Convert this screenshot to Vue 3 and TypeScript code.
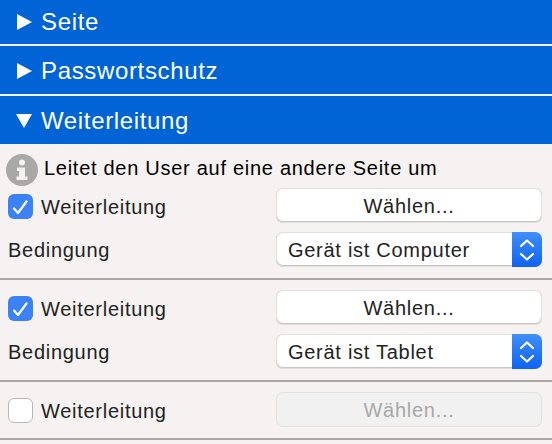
<script setup lang="ts">
interface Redirect {
  id: number;
  checked: boolean;
  condition?: string;
}

const sections = [
  { id: 'page', title: 'Seite', open: false },
  { id: 'password', title: 'Passwortschutz', open: false },
  { id: 'redirect', title: 'Weiterleitung', open: true },
];

const redirects: Redirect[] = [
  { id: 1, checked: true, condition: 'Gerät ist Computer' },
  { id: 2, checked: true, condition: 'Gerät ist Tablet' },
  { id: 3, checked: false },
];
</script>

<template>
  <div class="panel">
    <div
      v-for="s in sections"
      :key="s.id"
      class="heading"
      :class="{ open: s.open }"
    >
      <svg class="arrow" viewBox="0 0 16 16" width="16" height="16">
        <path v-if="s.open" d="M0 1 H16 L8 15 Z" fill="#fff" />
        <path v-else d="M1 0 L16 8 L1 16 Z" fill="#fff" />
      </svg>
      <span>{{ s.title }}</span>
    </div>

    <div class="content">
      <div class="info">
        <svg class="info-icon" viewBox="0 0 32 32" width="32" height="32">
          <circle cx="16" cy="16" r="16" fill="#a9a8a7" />
          <circle cx="16" cy="8.5" r="3" fill="#f5f2f1" />
          <path d="M11 13.5 H19 V22.5 H21.5 V26 H10.5 V22.5 H13 V17 H11 Z" fill="#f5f2f1" />
        </svg>
        <span class="info-text">Leitet den User auf eine andere Seite um</span>
      </div>

      <div
        v-for="r in redirects"
        :key="r.id"
        class="group"
        :class="{ first: r.id === 1 }"
      >
        <div class="check-label">
          <span class="checkbox" :class="{ checked: r.checked }">
            <svg v-if="r.checked" viewBox="0 0 25 25" width="25" height="25">
              <path d="M6 14.5 L10 19 L18.5 7.5" fill="none" stroke="#fff" stroke-width="2.2" stroke-linecap="round" stroke-linejoin="round" />
            </svg>
          </span>
          <span>Weiterleitung</span>
        </div>
        <button class="btn" :disabled="!r.checked">Wählen...</button>

        <template v-if="r.condition">
          <div class="label">Bedingung</div>
          <div class="select">
            <span class="select-text">{{ r.condition }}</span>
            <span class="stepper">
              <svg viewBox="0 0 30 36" width="30" height="36">
                <path d="M9 14 L15 8.5 L21 14 M9 22 L15 27.5 L21 22" fill="none" stroke="#fff" stroke-width="2.2" stroke-linecap="round" stroke-linejoin="round" />
              </svg>
            </span>
          </div>
        </template>
      </div>
    </div>
  </div>
</template>

<style>
html,
body {
  margin: 0;
  background: #f5f2f1;
}
</style>

<style scoped>
.panel {
  width: 552px;
  height: 444px;
  overflow: hidden;
  font-family: 'Liberation Sans', Arial, sans-serif;
  background: #f5f2f1;
  color: #222;
}

.heading {
  display: flex;
  align-items: center;
  gap: 9px;
  height: 44px;
  padding-left: 16px;
  margin-bottom: 2px;
  background: #0064d6;
  color: #fff;
  font-size: 24px;
  letter-spacing: 0.65px;
}

.heading:nth-child(2),
.heading.open {
  box-sizing: border-box;
  height: 48px;
  padding-top: 2px;
}

.heading.open {
  margin-bottom: 0;
}

.info {
  display: flex;
  align-items: center;
  gap: 6px;
  height: 32px;
  padding: 10px 0 2px 6px;
  font-size: 20px;
  letter-spacing: 0.72px;
  color: #000;
}

.info-text {
  margin-bottom: 4px;
}

.group {
  display: grid;
  grid-template-columns: 1fr 266px;
  align-items: center;
  row-gap: 9px;
  padding: 10px 10px 11px 8px;
  border-bottom: 2px solid #a9a8a7;
  font-size: 20px;
  letter-spacing: 0.72px;
  line-height: 24px;
}

.group.first {
  padding-top: 0;
}

.check-label {
  display: flex;
  align-items: center;
  gap: 8px;
  padding-top: 2px;
}

.label {
  padding-top: 1px;
}

.checkbox {
  display: block;
  width: 25px;
  height: 25px;
  box-sizing: border-box;
  border: 1px solid #b9b7b6;
  border-radius: 6px;
  background: #fff;
}

.checkbox.checked {
  border: 0;
  background: #3b82f7;
}

.checkbox svg {
  display: block;
}

.btn {
  height: 35px;
  padding: 1px 0 0;
  border: 0;
  border-radius: 7px;
  background: #fff;
  box-shadow: inset 0 0 0 1px #e2e0df, inset 0 -1px 0 1px #c8c6c5;
  color: #222;
  font: inherit;
  letter-spacing: inherit;
}

.btn:disabled {
  background: #f2f1f1;
  box-shadow: inset 0 0 0 1px #e4e2e1;
  color: #a8a8a8;
}

.select {
  display: flex;
  align-items: center;
  height: 35px;
  overflow: hidden;
  border-radius: 7px;
  background: #fff;
  box-shadow: inset 0 0 0 1px #e2e0df, inset 0 -1px 0 1px #c8c6c5;
}

.select-text {
  flex: 1;
  padding: 1px 0 0 12px;
}

.stepper {
  display: block;
  width: 30px;
  height: 35px;
  background: linear-gradient(#3f8ffa, #0f62f5);
}

.stepper svg {
  display: block;
}
</style>
